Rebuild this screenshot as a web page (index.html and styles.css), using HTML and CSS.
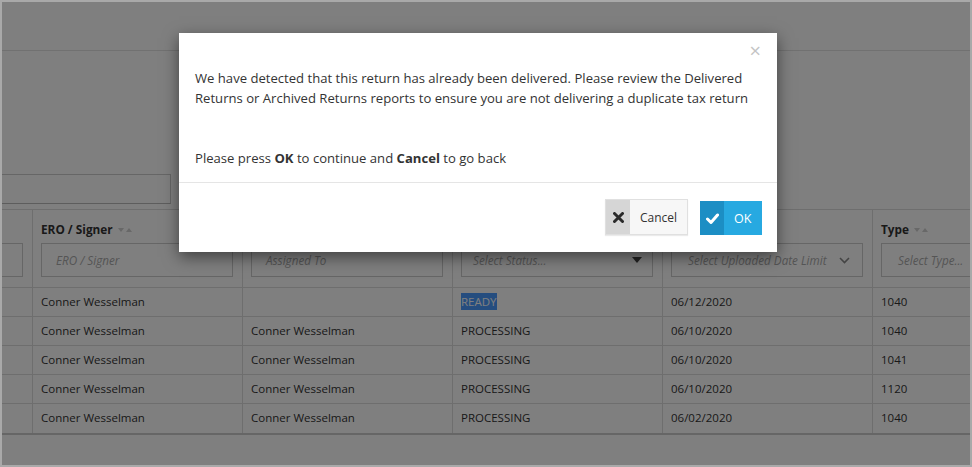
FILE: index.html
```html
<!DOCTYPE html>
<html lang="en">
<head>
<meta charset="utf-8">
<title>Returns</title>
<link rel="stylesheet" href="styles.css">
</head>
<body>
<div class="window">
  <div class="page">
    <div class="topbar"></div>
    <div class="toolbar">
      <div class="search"></div>
    </div>
    <div class="grid">
      <div class="hcell first"><div class="filter"></div></div>
      <div class="hcell">
        <div class="htitle">ERO / Signer <svg class="sort" width="14" height="6" viewBox="0 0 14 6"><path d="M0 1h6L3 5z M8 5h6L11 1z" fill="#d0d0d0"/></svg></div>
        <div class="filter"><span class="ph">ERO / Signer</span></div>
      </div>
      <div class="hcell">
        <div class="htitle">&nbsp;</div>
        <div class="filter"><span class="ph">Assigned To</span></div>
      </div>
      <div class="hcell">
        <div class="htitle">&nbsp;</div>
        <div class="filter select"><span class="ph">Select Status...</span><svg width="10" height="6" viewBox="0 0 10 6"><path d="M0 0h10L5 6z" fill="#444"/></svg></div>
      </div>
      <div class="hcell">
        <div class="htitle">&nbsp;</div>
        <div class="filter select"><span class="ph">Select Uploaded Date Limit</span><svg width="11" height="7" viewBox="0 0 11 7"><path d="M1 1l4.5 4.5L10 1" fill="none" stroke="#888" stroke-width="1.6"/></svg></div>
      </div>
      <div class="hcell last">
        <div class="htitle">Type <svg class="sort" width="14" height="6" viewBox="0 0 14 6"><path d="M0 1h6L3 5z M8 5h6L11 1z" fill="#d0d0d0"/></svg></div>
        <div class="filter"><span class="ph">Select Type...</span></div>
      </div>

      <div class="cell first"></div><div class="cell">Conner Wesselman</div><div class="cell"></div><div class="cell"><span class="sel">READY</span></div><div class="cell">06/12/2020</div><div class="cell last">1040</div>
      <div class="cell first"></div><div class="cell">Conner Wesselman</div><div class="cell">Conner Wesselman</div><div class="cell">PROCESSING</div><div class="cell">06/10/2020</div><div class="cell last">1040</div>
      <div class="cell first"></div><div class="cell">Conner Wesselman</div><div class="cell">Conner Wesselman</div><div class="cell">PROCESSING</div><div class="cell">06/10/2020</div><div class="cell last">1041</div>
      <div class="cell first"></div><div class="cell">Conner Wesselman</div><div class="cell">Conner Wesselman</div><div class="cell">PROCESSING</div><div class="cell">06/10/2020</div><div class="cell last">1120</div>
      <div class="cell first"></div><div class="cell">Conner Wesselman</div><div class="cell">Conner Wesselman</div><div class="cell">PROCESSING</div><div class="cell">06/02/2020</div><div class="cell last">1040</div>
    </div>
    <div class="overlay"></div>
    <div class="modal">
      <div class="modal-header"><span class="close">&times;</span></div>
      <div class="modal-body">
        <p>We have detected that this return has already been delivered. Please review the Delivered Returns or Archived Returns reports to ensure you are not delivering a duplicate tax return</p>
        <p class="second">Please press <b>OK</b> to continue and <b>Cancel</b> to go back</p>
      </div>
      <div class="modal-footer">
        <button class="btn cancel"><span class="ico"><svg width="11" height="11" viewBox="0 0 11 11"><path d="M1.5 1.5l8 8M9.5 1.5l-8 8" stroke="#2b2b2b" stroke-width="3" stroke-linecap="round"/></svg></span><span class="lbl">Cancel</span></button>
        <button class="btn ok"><span class="ico"><svg width="13" height="11" viewBox="0 0 13 11"><path d="M1.5 6l3.5 3.5L11.5 2" fill="none" stroke="#fff" stroke-width="3" stroke-linecap="round" stroke-linejoin="round"/></svg></span><span class="lbl">OK</span></button>
      </div>
    </div>
  </div>
</div>
</body>
</html>
```
FILE: styles.css
```css
* { box-sizing: border-box; }
html, body { margin: 0; padding: 0; }
body { font-family: "Open Sans", "Noto Sans", sans-serif; font-size: 13px; color: #333; background: #a9a9a9; }
.window { width: 972px; height: 467px; border: 2px solid #a9a9a9; overflow: hidden; }
.page { position: relative; width: 100%; height: 100%; background: #fff; overflow: hidden; }
.topbar { height: 49px; border-bottom: 1px solid #e2e2e2; }
.toolbar { height: 158px; display: flex; flex-direction: column; justify-content: flex-end; padding-bottom: 5px; }
.search { width: 180px; height: 30px; margin-left: -11px; border: 1px solid #ccc; border-bottom-color: #bbb; }
.grid { display: grid; grid-template-columns: 31px repeat(4, 210px) 1fr; border-top: 1px solid #ddd; border-bottom: 2px solid #ccc; font-size: 11.5px; }
.hcell { padding: 9px 9px 10px 8px; border-right: 1px solid #ddd; border-bottom: 1px solid #ddd; }
.hcell.first { padding-top: 33px; padding-left: 0; }
.hcell.first .filter { margin-left: -10px; margin-top: 0; }
.htitle { height: 20px; line-height: 20px; font-weight: 700; font-size: 11.8px; color: #333; display: flex; align-items: center; gap: 5px; }
.sort { margin-top: 1px; }
.filter { margin-top: 4px; height: 34px; border: 1px solid #ccc; display: flex; align-items: center; padding: 0 11px 0 14px; }
.ph { font-style: italic; color: #aaa; font-size: 11.7px; white-space: nowrap; }
.select { justify-content: space-between; }
.select .ph { padding-left: 0; }
.hcell:nth-child(4) .filter { padding-left: 11px; padding-right: 10px; }
.hcell:nth-child(5) .filter { padding-left: 16px; padding-right: 12px; }
.hcell.last .filter { padding-left: 16px; }
.cell { height: 29px; line-height: 28px; padding-left: 8px; border-right: 1px solid #ddd; border-bottom: 1px solid #ddd; white-space: nowrap; }
.last { border-right: none; }
.grid > .cell:nth-last-child(-n+6) { border-bottom: none; }
.sel { background: #4a9bff; color: #fff; padding: 1px 0; }
.overlay { position: absolute; inset: 0; background: rgba(0,0,0,0.5); }
.modal { position: absolute; left: 177px; top: 31px; width: 598px; height: 219px; background: #fff; box-shadow: 0 5px 15px rgba(0,0,0,0.5); display: flex; flex-direction: column; }
.modal-header { height: 26px; padding: 8px 16px 0; display: flex; justify-content: flex-end; }
.close { font-size: 20px; line-height: 19px; color: #c4c4c4; }
.modal-body { padding: 9px 16px 0; height: 124px; border-bottom: 1px solid #e5e5e5; }
.modal-body p { margin: 0; font-size: 13.1px; line-height: 20px; color: #333; }
.modal-body p.second { margin-top: 40px; }
.modal-footer { flex: 1; display: flex; justify-content: flex-end; align-items: flex-end; gap: 12px; padding: 0 15px 17px; }
.btn { display: flex; align-items: stretch; padding: 0; border: none; font-family: inherit; font-size: 12px; cursor: pointer; }
.btn .ico { display: flex; align-items: center; justify-content: center; }
.btn .lbl { display: flex; align-items: center; }
.cancel { height: 36px; width: 83px; border: 1px solid #e0e0e0; background: #f7f7f7; box-shadow: 0 1px 1px rgba(0,0,0,0.08); }
.cancel .ico { width: 24px; background: #d6d6d6; }
.cancel .lbl { padding-left: 10px; color: #333; }
.ok { height: 34px; width: 62px; background: #27a9e1; font-size: 12.5px; }
.ok .ico { width: 24px; background: #1c8ec4; }
.ok .lbl { padding-left: 10px; color: #fff; }
```
